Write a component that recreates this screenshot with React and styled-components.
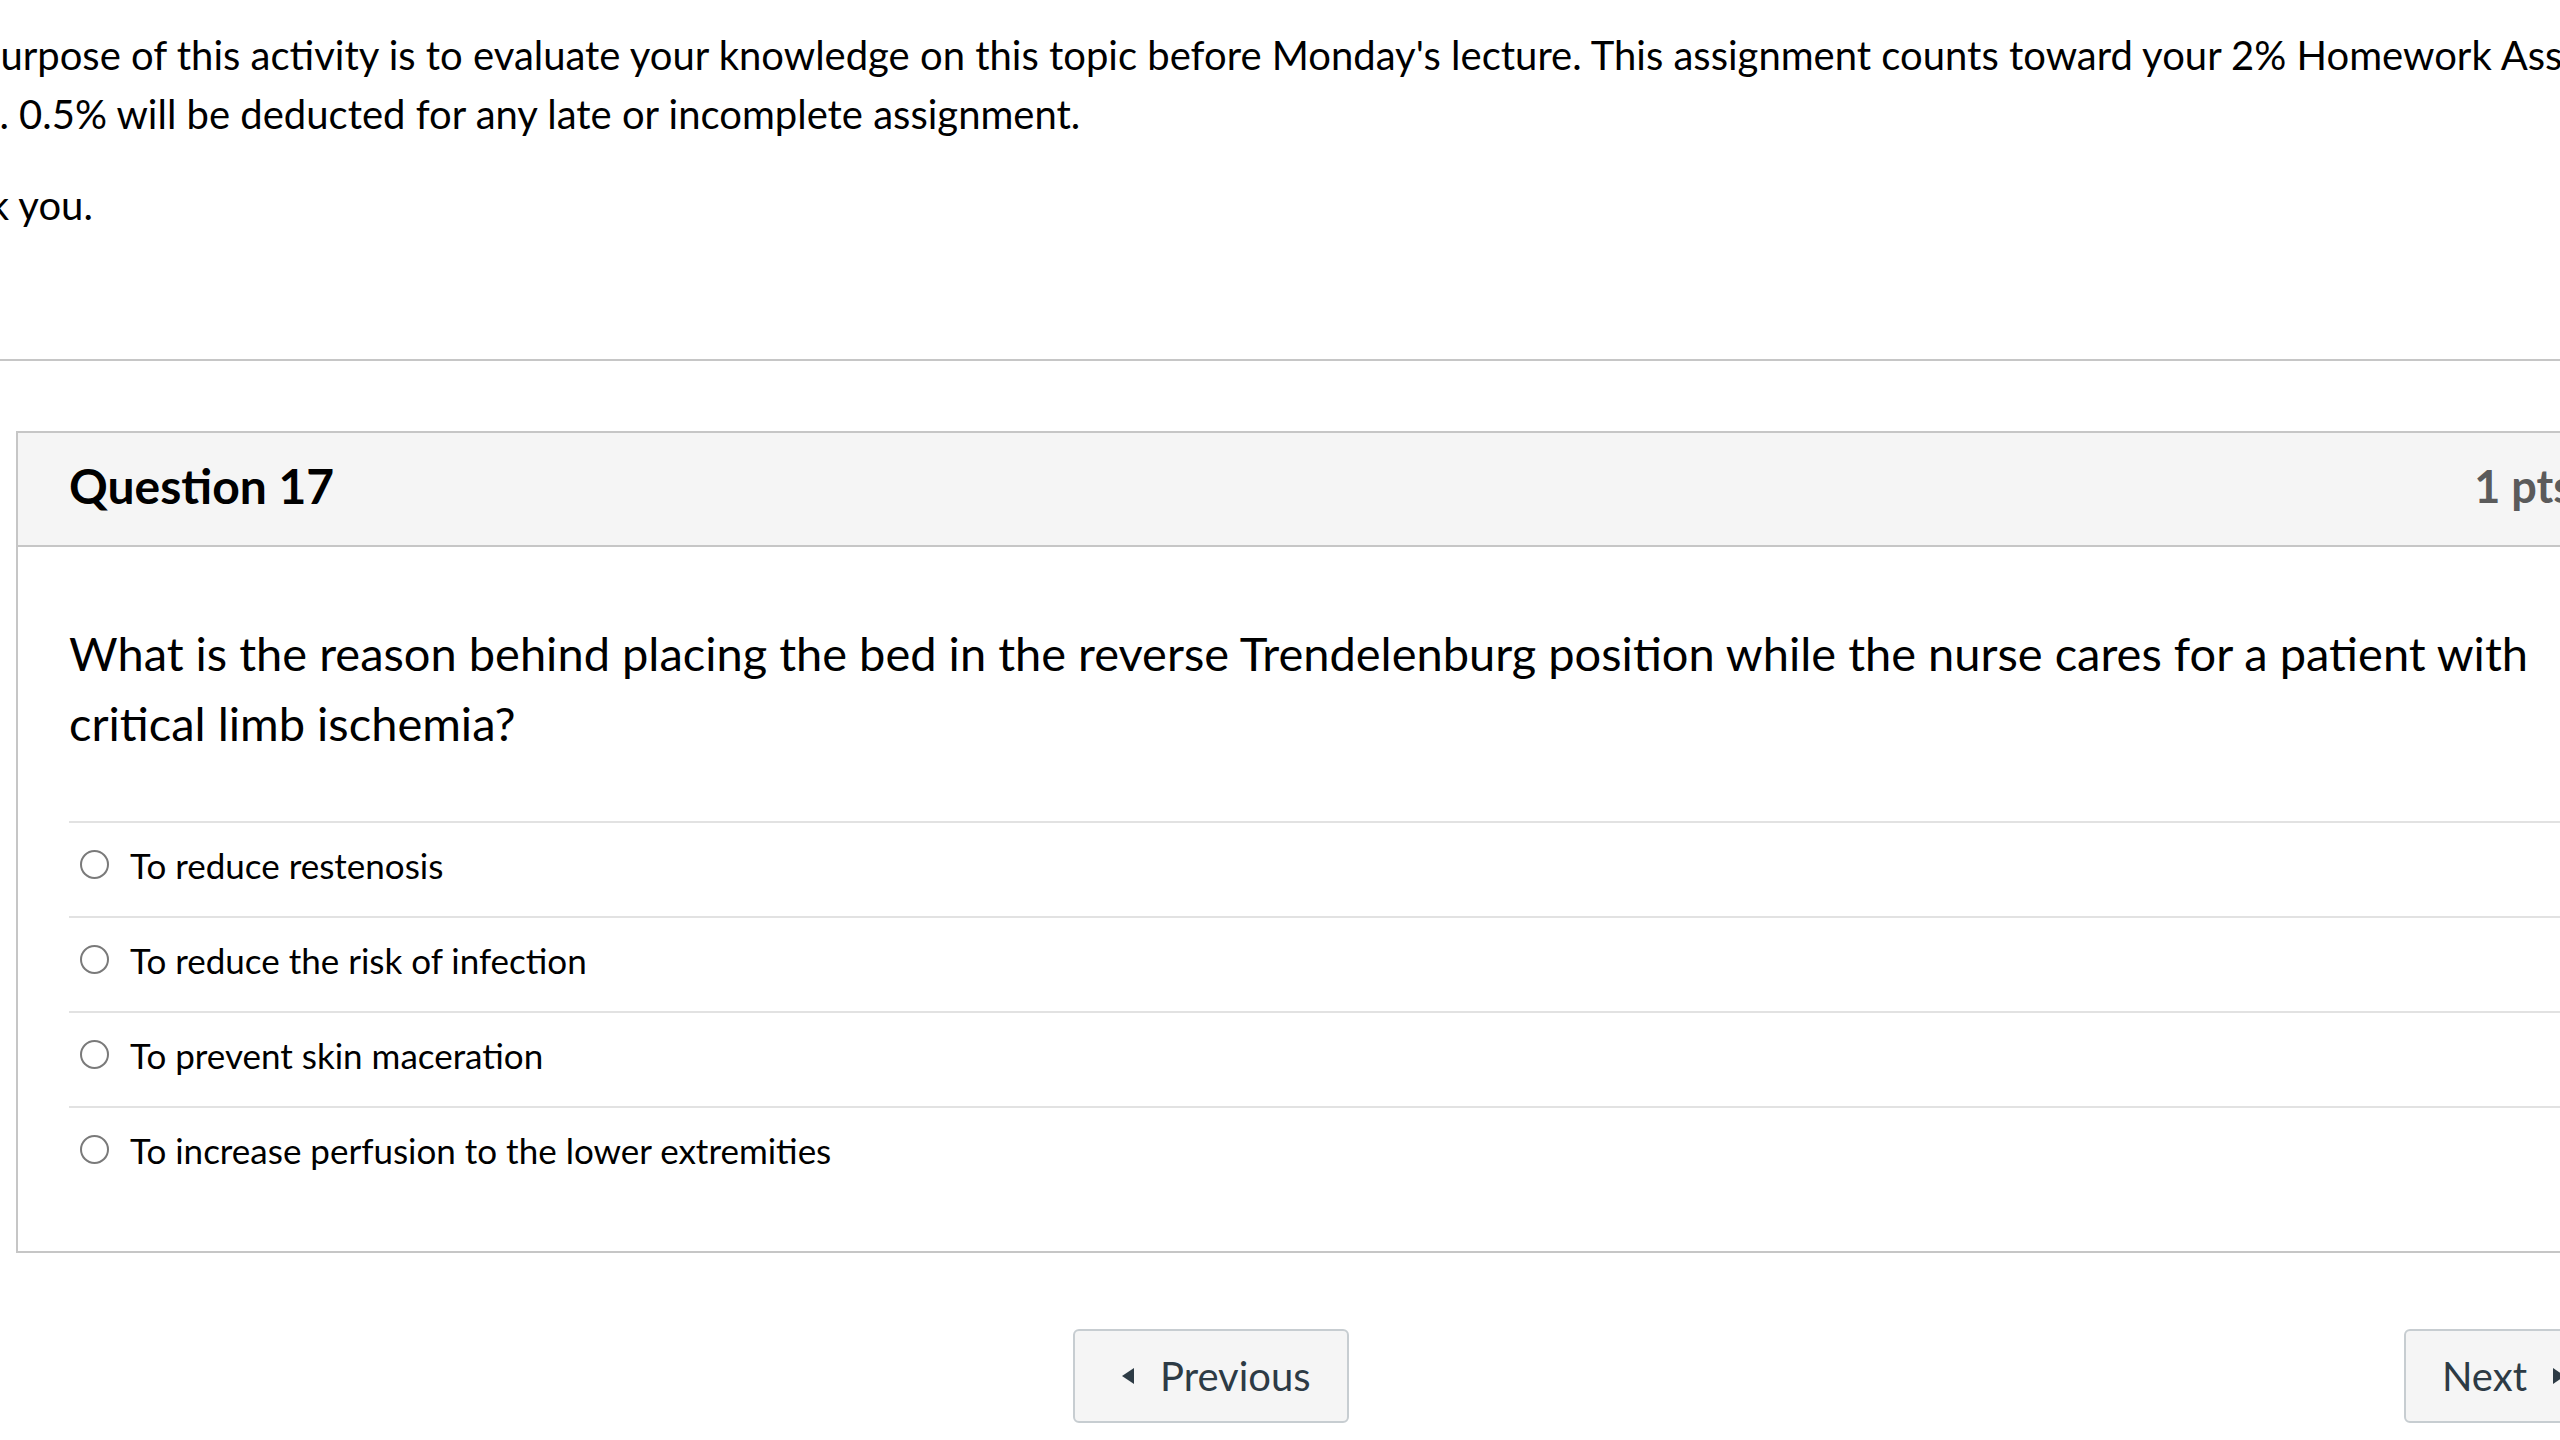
import React from "react";
import styled, { createGlobalStyle } from "styled-components";

const Global = createGlobalStyle`
  html, body { margin: 0; padding: 0; background: #fff; }
  body { overflow: hidden; font-family: Lato, "Open Sans", Arial, sans-serif; color: #000; }
  * { box-sizing: border-box; }
`;

const Page = styled.div`
  width: 2560px;
  height: 1440px;
  overflow: hidden;
  padding-top: 26px;
`;

const Description = styled.div`
  margin-left: -99px;
  font-size: 40px;
  line-height: 58.5px;
  white-space: nowrap;
  color: #000;
`;

const Para = styled.p`
  margin: ${(p) => p.$top || 0}px 0 0;
`;

const Rule = styled.hr`
  margin: 124px 0 0;
  border: 0;
  border-top: 2px solid #c6c6c6;
  height: 0;
`;

const QuestionBox = styled.section`
  margin: 70px 0 0 16px;
  width: 2607px;
  border: 2px solid #c6c6c6;
`;

const Header = styled.header`
  height: 114px;
  background: #f5f5f5;
  border-bottom: 2px solid #c6c6c6;
  padding: 0 51px 6px;
  display: flex;
  align-items: center;
  justify-content: space-between;
`;

const Title = styled.h2`
  margin: 0;
  font-size: 48px;
  font-weight: 700;
  color: #000;
`;

const Points = styled.span`
  font-size: 45px;
  font-weight: 700;
  color: #5b5b5b;
  margin-right: -3px;
`;

const Body = styled.div`
  padding: 71px 51px 50px;
`;

const QuestionText = styled.p`
  margin: 0 0 63px;
  font-size: 47px;
  line-height: 70px;
  color: #000;
`;

const Answers = styled.div`
  display: flex;
  flex-direction: column;
`;

const AnswerRow = styled.label`
  display: flex;
  align-items: center;
  gap: 21px;
  border-top: 2px solid #e2e2e2;
  padding: 22px 0 31px 11px;
  font-size: 35px;
  line-height: 40px;
  color: #000;
`;

const Radio = styled.span`
  width: 29px;
  height: 29px;
  border-radius: 50%;
  border: 2px solid #7a7a7a;
  background: #fff;
  flex: none;
`;

const Footer = styled.nav`
  margin: 76px 0 0 1073px;
  width: 1541px;
  display: flex;
  justify-content: space-between;
`;

const NavButton = styled.button`
  height: 94px;
  padding: 0 36px;
  border: 2px solid #c7cdd1;
  border-radius: 6px;
  background: #f5f5f5;
  color: #2d3b45;
  font-family: Lato, "Open Sans", Arial, sans-serif;
  font-size: 40px;
  display: flex;
  align-items: center;
  gap: 26px;
`;

const CaretBox = styled.span`
  width: 23px;
  display: flex;
  justify-content: ${(p) => (p.$dir === "left" ? "flex-end" : "flex-start")};
`;

const Caret = styled.span`
  width: 0;
  height: 0;
  border-top: 8px solid transparent;
  border-bottom: 8px solid transparent;
  ${(p) =>
    p.$dir === "left"
      ? "border-right: 12px solid #2d3b45;"
      : "border-left: 12px solid #2d3b45;"}
`;

const answers = [
  "To reduce restenosis",
  "To reduce the risk of infection",
  "To prevent skin maceration",
  "To increase perfusion to the lower extremities",
];

export default function App() {
  return (
    <Page>
      <Global />
      <Description>
        <Para>
          The purpose of this activity is to evaluate your knowledge on this topic before Monday's lecture. This assignment counts toward your 2% Homework Assignment
          <br />
          grade. 0.5% will be deducted for any late or incomplete assignment.
        </Para>
        <Para $top={33}>Thank you.</Para>
      </Description>
      <Rule />
      <QuestionBox>
        <Header>
          <Title>Question 17</Title>
          <Points>1 pts</Points>
        </Header>
        <Body>
          <QuestionText>
            What is the reason behind placing the bed in the reverse Trendelenburg position while the nurse cares for a patient with critical limb ischemia?
          </QuestionText>
          <Answers>
            {answers.map((a) => (
              <AnswerRow key={a}>
                <Radio />
                {a}
              </AnswerRow>
            ))}
          </Answers>
        </Body>
      </QuestionBox>
      <Footer>
        <NavButton>
          <CaretBox $dir="left">
            <Caret $dir="left" />
          </CaretBox>
          Previous
        </NavButton>
        <NavButton>
          Next
          <CaretBox $dir="right">
            <Caret $dir="right" />
          </CaretBox>
        </NavButton>
      </Footer>
    </Page>
  );
}
